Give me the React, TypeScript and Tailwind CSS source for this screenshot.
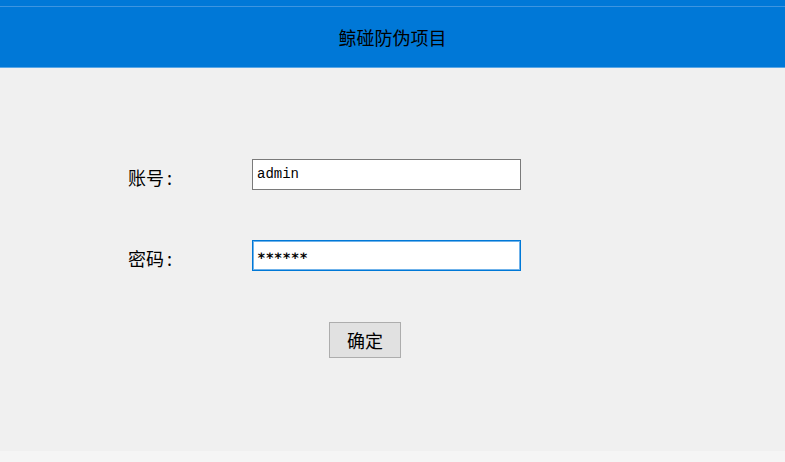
import React from "react";

export default function App() {
  const cjk = { fontFamily: '"Noto Sans CJK SC", "Noto Sans", sans-serif' };
  return (
    <div className="w-[785px] h-[462px] flex flex-col bg-[#f0f0f0] overflow-hidden" style={cjk}>
      <div className="h-[68px] flex flex-col bg-[#0078d7]">
        <div className="h-[6px]" />
        <div className="h-[1px] bg-[#3d95e0]" />
        <div className="flex-1 flex items-center justify-center text-[18px] text-black leading-none pb-[1px]">
          鲸碰防伪项目
        </div>
        <div className="h-[1px] bg-[#5aa7e6]" />
      </div>
      <div className="flex-1 flex flex-col">
        <div className="mt-[91px] flex items-start">
          <div className="w-[252px] pl-[128px] pt-[6px] text-[18px] leading-[24px] text-black">
            账号<span className="ml-[3px]">:</span>
          </div>
          <div className="w-[269px] h-[31px] border border-[#7a7a7a] bg-white flex items-center px-[4px] text-[14px] text-black" style={{ fontFamily: '"Liberation Mono", monospace' }}>
            admin
          </div>
        </div>
        <div className="mt-[50px] flex items-start">
          <div className="w-[252px] pl-[128px] pt-[6px] text-[18px] leading-[24px] text-black">
            密码<span className="ml-[3px]">:</span>
          </div>
          <div className="w-[269px] h-[31px] border border-[#0078d7] shadow-[inset_0_0_0_1px_#6fb2ea] bg-white flex items-center px-[4px] text-[14px] text-black" style={{ fontFamily: '"DejaVu Sans Mono", monospace' }}>
            <span className="font-bold tracking-[0px]">∗∗∗∗∗∗</span>
          </div>
        </div>
        <div className="mt-[51px] flex">
          <div className="ml-[329px] w-[72px] h-[36px] border border-[#adadad] bg-[#e1e1e1] flex items-center justify-center text-[18px] text-black leading-none">
            确定
          </div>
        </div>
        <div className="flex-1" />
        <div className="h-[11px] bg-[#f5f5f5]" />
      </div>
    </div>
  );
}
